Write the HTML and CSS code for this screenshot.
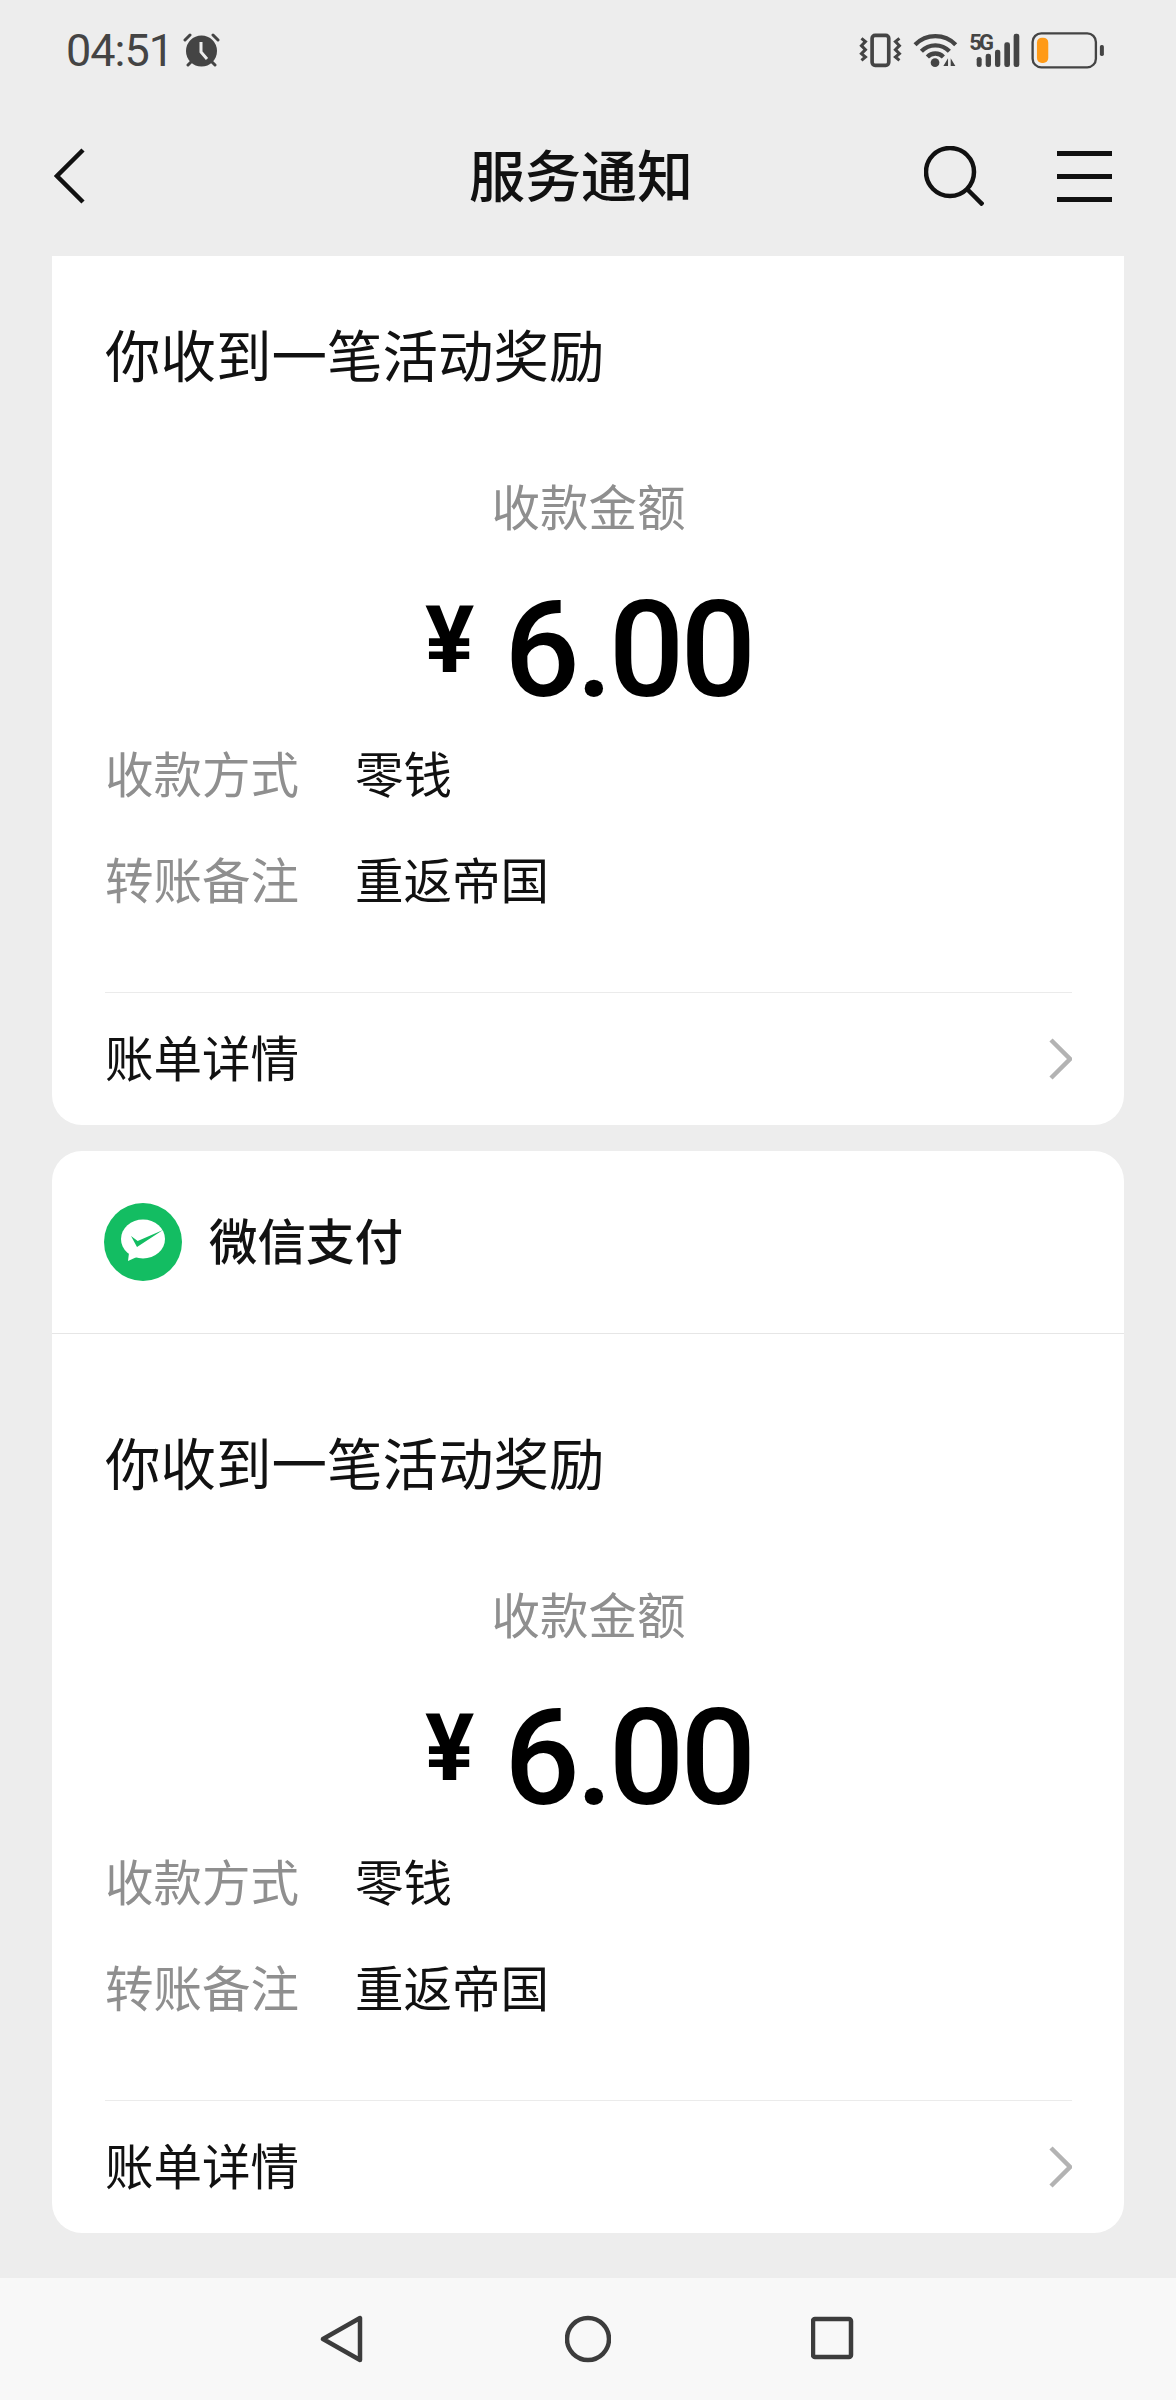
FILE: index.html
```html
<!DOCTYPE html>
<html lang="zh-CN">
<head>
  <meta charset="UTF-8" />
  <meta name="viewport" content="width=device-width, initial-scale=1.0"/>
  <title>服务通知</title>
  <link rel="stylesheet" href="styles.css">
</head>
<body>
  <div class="phone">
    <div class="top-area">
      <div class="status-bar">
        <div class="status-left">
          <span class="status-time">04:51</span>
          <svg class="alarm-icon" viewBox="0 0 37 34" width="37" height="34">
            <circle cx="18.5" cy="18" r="15.5" fill="#444"/>
            <path d="M18 9v10l6 7" fill="none" stroke="#ededed" stroke-width="3"/>
            <path d="M2 7l5-5M35 7l-5-5M5 32l3-3M32 32l-3-3" fill="none" stroke="#444" stroke-width="3" stroke-linecap="round"/>
          </svg>
        </div>
        <svg class="status-icons" viewBox="170 90 750 115" width="250" height="38.3">
          <rect x="218" y="103" width="50" height="90" rx="9" fill="none" stroke="#444" stroke-width="11"/>
          <path d="M186 112l12 10-12 12 12 12-12 12 12 10-12 10M300 112l-12 10 12 12-12 12 12 12-12 10 12 10" fill="none" stroke="#444" stroke-width="9"/>
          <path d="M347 131a85 85 0 0 1 122 0M366 151a58 58 0 0 1 84 0M384 168a33 33 0 0 1 48 0" fill="none" stroke="#444" stroke-width="13"/>
          <circle cx="407" cy="185" r="13" fill="#444"/>
          <path d="M446 172v23h-14zM454 172v23h14z" fill="#444"/>
          <text class="status-5g" x="510" y="147">5G</text>
          <rect x="532" y="168" width="15" height="30" rx="7" fill="#444"/>
          <rect x="559" y="158" width="16" height="40" rx="7" fill="#444"/>
          <rect x="587" y="146" width="16" height="52" rx="7" fill="#444"/>
          <rect x="615" y="124" width="17" height="74" rx="7" fill="#444"/>
          <rect x="643" y="98" width="17" height="100" rx="7" fill="#444"/>
          <rect x="700" y="97" width="190" height="102" rx="26" fill="none" stroke="#444" stroke-width="7"/>
          <rect x="713" y="110" width="34" height="76" rx="15" fill="#ff9a17"/>
          <rect x="902" y="132" width="12" height="33" rx="5" fill="#444"/>
        </svg>
      </div>
      <div class="nav-bar">
        <svg class="back-icon" viewBox="0 0 32 56" width="32" height="56">
          <path d="M29 2L3 28l26 26" fill="none" stroke="#111" stroke-width="4.5"/>
        </svg>
        <h1 class="nav-title">服务通知</h1>
        <div class="nav-actions">
          <svg viewBox="0 0 60 60" width="60" height="60">
            <circle cx="26" cy="26" r="24" fill="none" stroke="#111" stroke-width="4.5"/>
            <path d="M44 44l15 15" fill="none" stroke="#111" stroke-width="4.5"/>
          </svg>
          <div class="menu-icon"><span></span><span></span><span></span></div>
        </div>
      </div>
    </div>

    <div class="feed">
      <div class="card card-scrolled">
        <div class="card-body">
          <div class="notice-title">你收到一笔活动奖励</div>
          <div class="amount-label">收款金额</div>
          <div class="amount"><span class="amount-sign">¥</span><span class="amount-value">6.00</span></div>
          <div class="detail-row"><span class="detail-key">收款方式</span><span class="detail-val">零钱</span></div>
          <div class="detail-row detail-row-2"><span class="detail-key">转账备注</span><span class="detail-val">重返帝国</span></div>
          <div class="bill-link">
            <span class="bill-text">账单详情</span>
            <svg viewBox="0 0 23 42" width="23" height="42"><path d="M2 2l19 19L2 40" fill="none" stroke="#b3b3b3" stroke-width="4.5"/></svg>
          </div>
        </div>
      </div>

      <div class="card">
        <div class="card-head">
          <svg class="pay-logo" viewBox="0 0 78 78" width="78" height="78">
            <circle cx="39" cy="39" r="39" fill="#13bd62"/>
            <ellipse cx="39" cy="36" rx="22" ry="19.500" fill="#fff"/>
            <path d="M25 50l-1 8 11-5z" fill="#fff"/>
            <path d="M27 33l6.700 5L59 27 33 44z" fill="#13bd62"/>
          </svg>
          <span class="card-name">微信支付</span>
        </div>
        <div class="card-body">
          <div class="notice-title">你收到一笔活动奖励</div>
          <div class="amount-label">收款金额</div>
          <div class="amount"><span class="amount-sign">¥</span><span class="amount-value">6.00</span></div>
          <div class="detail-row"><span class="detail-key">收款方式</span><span class="detail-val">零钱</span></div>
          <div class="detail-row detail-row-2"><span class="detail-key">转账备注</span><span class="detail-val">重返帝国</span></div>
          <div class="bill-link">
            <span class="bill-text">账单详情</span>
            <svg viewBox="0 0 23 42" width="23" height="42"><path d="M2 2l19 19L2 40" fill="none" stroke="#b3b3b3" stroke-width="4.5"/></svg>
          </div>
        </div>
      </div>
    </div>

    <div class="sys-nav">
      <svg viewBox="0 0 46 48" width="46" height="48">
        <path d="M41 3v42L4 24z" fill="none" stroke="#3c3c3c" stroke-width="4.500" stroke-linejoin="round"/>
      </svg>
      <svg viewBox="0 0 46 48" width="46" height="48">
        <circle cx="23" cy="24" r="21" fill="none" stroke="#3c3c3c" stroke-width="4.500"/>
      </svg>
      <svg viewBox="0 0 46 48" width="46" height="48">
        <rect x="2" y="4" width="38" height="38" rx="2" fill="none" stroke="#3c3c3c" stroke-width="4.500"/>
      </svg>
    </div>
  </div>
</body>
</html>
```

FILE: styles.css
```css
* {
  margin: 0;
  padding: 0;
  box-sizing: border-box;
}

body {
  background: #ededed;
  font-family: "Noto Sans CJK SC", "Noto Sans", sans-serif;
  color: #111;
}

.phone {
  display: flex;
  flex-direction: column;
  height: 2400px;
}

/* status bar + title bar */
.top-area {
  height: 256px;
  background: #ededed;
  flex-shrink: 0;
}

.status-bar {
  display: flex;
  justify-content: space-between;
  align-items: center;
  height: 100px;
  padding: 0 70px 0 66px;
}

.status-left {
  display: flex;
  align-items: center;
  gap: 10px;
}

.status-time {
  font-family: Roboto, sans-serif;
  font-size: 45px;
  letter-spacing: -1px;
  color: #444;
}

.status-5g {
  font-family: Roboto, sans-serif;
  font-weight: 700;
  font-size: 66px;
  letter-spacing: -9px;
  fill: #444;
}

.nav-bar {
  display: flex;
  align-items: center;
  height: 152px;
  padding: 0 64px 0 54px;
}

.nav-title {
  margin-left: 383px;
  margin-bottom: 6px;
  font-size: 56px;
  font-weight: 500;
  line-height: 76px;
}

.nav-actions {
  display: flex;
  align-items: center;
  gap: 73px;
  margin-left: auto;
}

.menu-icon {
  display: flex;
  flex-direction: column;
  gap: 18px;
  width: 55px;
}

.menu-icon span {
  height: 5px;
  background: #111;
}

/* cards */
.feed {
  display: flex;
  flex-direction: column;
  gap: 26px;
  flex: 1;
  padding: 0 52px;
  overflow: hidden;
}

.card {
  background: #fff;
  border-radius: 30px;
}

.card-scrolled {
  border-radius: 0 0 30px 30px;
}

.card-scrolled .card-body {
  padding-top: 66px;
}

.card-head {
  display: flex;
  align-items: center;
  gap: 27px;
  height: 183px;
  padding-left: 52px;
  border-bottom: 1px solid #e6e6e6;
}

.card-name {
  margin-bottom: 6px;
  font-size: 48.500px;
  font-weight: 500;
}

.card-body {
  padding: 96px 52px 0 53px;
}

.notice-title {
  font-size: 55.500px;
  line-height: 62px;
}

.amount-label {
  margin-top: 91px;
  font-size: 48.500px;
  line-height: 60px;
  text-align: center;
  color: #8f8f8f;
}

.amount {
  display: flex;
  justify-content: center;
  gap: 30px;
  height: 150px;
  margin-top: 41px;
  color: #000;
}

.amount-sign {
  font-family: Roboto, sans-serif;
  font-weight: 700;
  font-size: 92px;
  line-height: 130px;
}

.amount-value {
  font-family: Roboto, sans-serif;
  font-weight: 500;
  font-size: 133px;
  line-height: 150px;
  letter-spacing: -4px;
}

.detail-row {
  display: flex;
  gap: 56px;
  margin-top: 16px;
  font-size: 48.500px;
  line-height: 60px;
}

.detail-row-2 {
  margin-top: 46px;
}

.detail-key {
  color: #8f8f8f;
}

.bill-link {
  display: flex;
  justify-content: space-between;
  align-items: center;
  height: 133px;
  margin-top: 84px;
  border-top: 1px solid #ebebeb;
  font-size: 48.500px;
}

.bill-text {
  margin-bottom: 6px;
}

/* android nav */
.sys-nav {
  display: flex;
  justify-content: center;
  align-items: center;
  gap: 200px;
  height: 122px;
  background: #f8f8f8;
  flex-shrink: 0;
}
```
